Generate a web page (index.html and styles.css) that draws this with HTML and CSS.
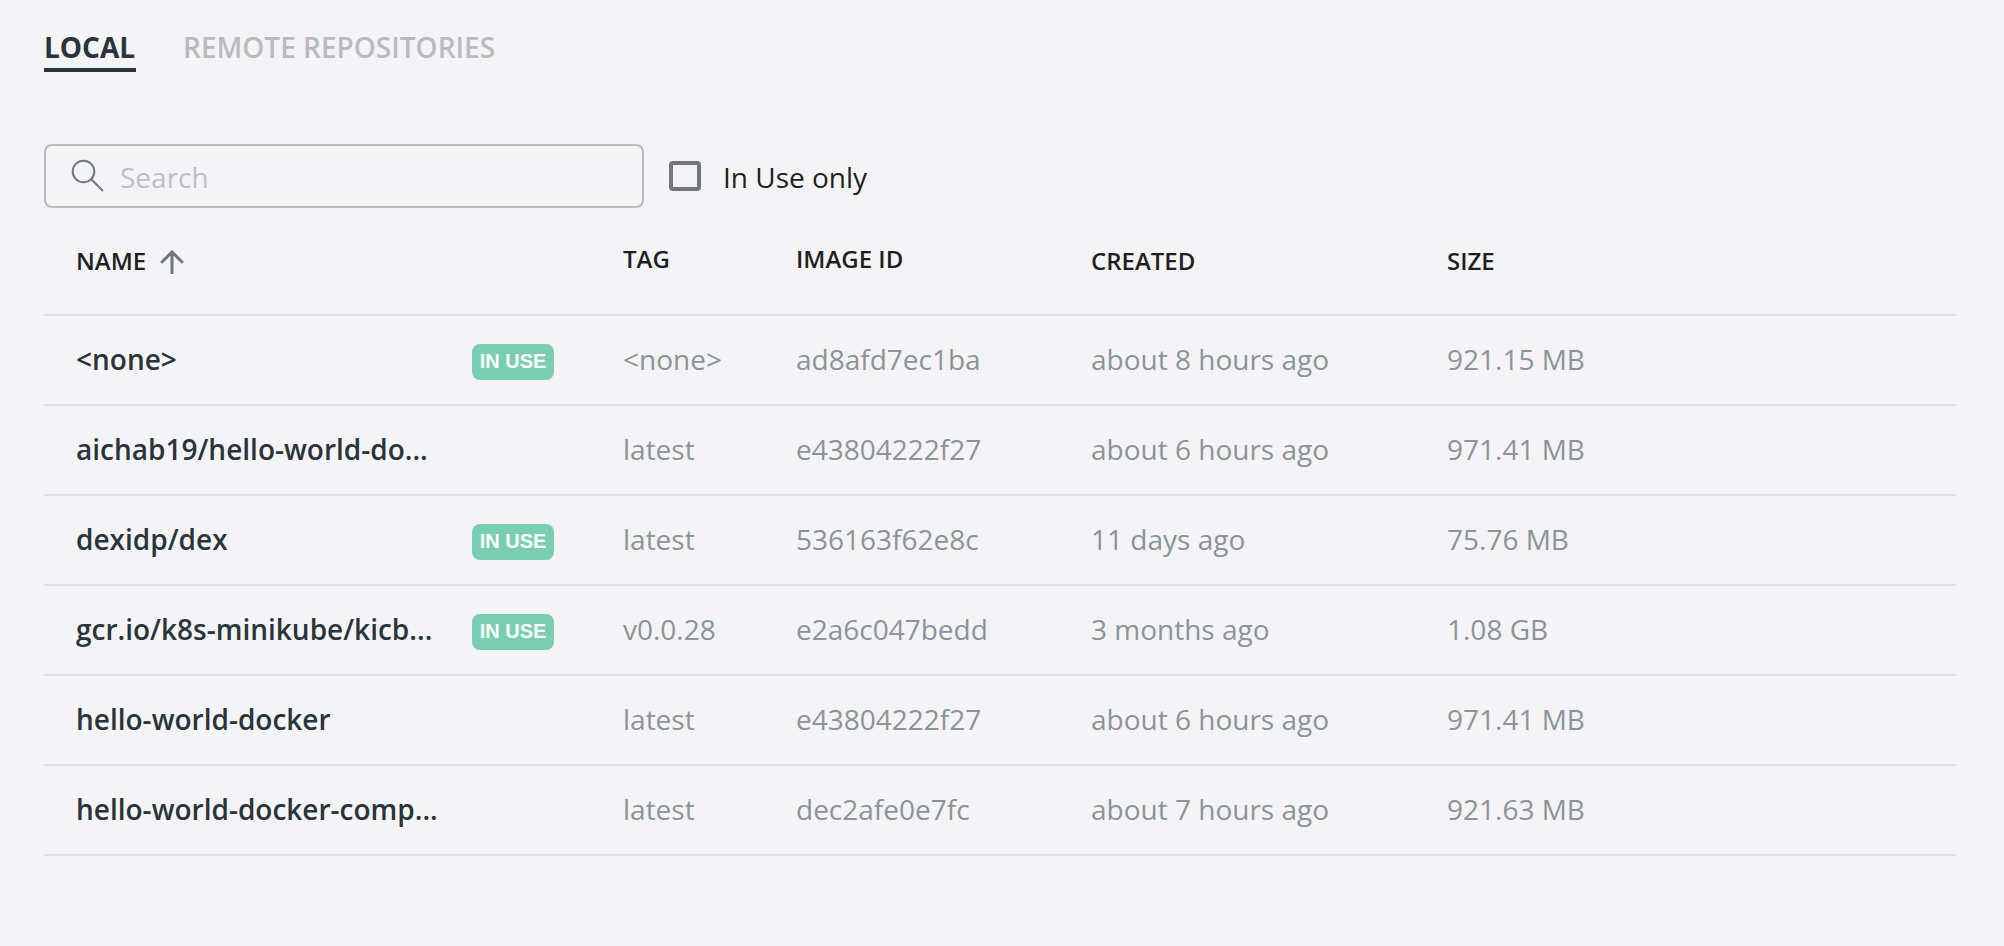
FILE: index.html
```html
<!DOCTYPE html>
<html lang="en">
<head>
<meta charset="utf-8">
<title>Images</title>
<link rel="stylesheet" href="styles.css">
</head>
<body>
<main class="images">
  <nav class="tabs">
    <a class="tab active">LOCAL</a>
    <a class="tab">REMOTE REPOSITORIES</a>
  </nav>
  <div class="toolbar">
    <label class="search">
      <svg class="search-icon" width="34" height="34" viewBox="0 0 34 34" fill="none" stroke="#6f787d" stroke-width="2"><circle cx="12.5" cy="12.5" r="10.8"/><path d="M20.5 20.5L32 32"/></svg>
      <input class="search-input" type="text" placeholder="Search">
    </label>
    <label class="filter"><span class="checkbox"></span><span class="filter-text">In Use only</span></label>
  </div>
  <section class="table">
    <div class="row head">
      <div class="sorted"><span>NAME</span><svg class="sort-icon" width="24" height="24" viewBox="0 0 24 24" fill="none" stroke="#6f787d" stroke-width="3"><path d="M12 24V2M1.2 12.8L12 2L22.8 12.8"/></svg></div>
      <div></div><div class="raised">TAG</div><div class="raised">IMAGE ID</div><div>CREATED</div><div>SIZE</div>
    </div>
    <div class="row"><div class="name">&lt;none&gt;</div><div><span class="badge">IN USE</span></div><div>&lt;none&gt;</div><div>ad8afd7ec1ba</div><div>about 8 hours ago</div><div>921.15 MB</div></div>
    <div class="row"><div class="name">aichab19/hello-world-do...</div><div></div><div>latest</div><div>e43804222f27</div><div>about 6 hours ago</div><div>971.41 MB</div></div>
    <div class="row"><div class="name">dexidp/dex</div><div><span class="badge">IN USE</span></div><div>latest</div><div>536163f62e8c</div><div>11 days ago</div><div>75.76 MB</div></div>
    <div class="row"><div class="name">gcr.io/k8s-minikube/kicb...</div><div><span class="badge">IN USE</span></div><div>v0.0.28</div><div>e2a6c047bedd</div><div>3 months ago</div><div>1.08 GB</div></div>
    <div class="row"><div class="name">hello-world-docker</div><div></div><div>latest</div><div>e43804222f27</div><div>about 6 hours ago</div><div>971.41 MB</div></div>
    <div class="row"><div class="name">hello-world-docker-comp...</div><div></div><div>latest</div><div>dec2afe0e7fc</div><div>about 7 hours ago</div><div>921.63 MB</div></div>
  </section>
</main>
</body>
</html>
```
FILE: styles.css
```css
* { box-sizing: border-box; }
body {
  margin: 0;
  background: #f4f4f6;
  font-family: "Open Sans", "Noto Sans", sans-serif;
  font-size: 28px;
  line-height: 38px;
  color: #1f1f1f;
}
.images { padding: 28px 48px 0 44px; }
.tabs { display: flex; gap: 47px; height: 44px; }
.tab { height: 44px; font-weight: 600; color: #b8bcbe; white-space: nowrap; }
.tab.active { width: 92px; font-weight: 700; color: #2a343b; border-bottom: 4px solid #2a343b; }
.toolbar { display: flex; gap: 25px; margin-top: 72px; height: 64px; }
.search {
  display: flex;
  align-items: center;
  width: 600px;
  padding-left: 25px;
  gap: 15px;
  border: 2px solid #b9b9ba;
  border-radius: 8px;
}
.search-icon { flex: none; }
.search-input {
  flex: 1;
  min-width: 0;
  height: 38px;
  margin-top: 1px;
  padding: 0;
  border: 0;
  outline: 0;
  background: transparent;
  font: inherit;
}
.search-input::placeholder { color: #bcc1c3; opacity: 1; }
.filter { display: flex; align-items: center; gap: 22px; padding-top: 3px; }
.filter-text { padding-bottom: 2px; }
.checkbox { width: 32px; height: 30px; margin-bottom: 4px; border: 4px solid #6f787d; border-radius: 4px; }
.row {
  display: grid;
  grid-template-columns: 396px 151px 173px 295px 356px 1fr;
  align-items: center;
  height: 90px;
  padding: 0 0 2px 32px;
  border-bottom: 2px solid #e0e0e2;
  color: #8b9499;
  white-space: nowrap;
}
.head { height: 108px; padding-bottom: 0; font-size: 24px; font-weight: 600; color: #1f1f1f; }
.sorted { display: flex; align-items: center; gap: 14px; }
.sort-icon { margin-top: 2px; }
.raised { padding-bottom: 4px; }
.name { font-weight: 600; color: #2a343b; }
.badge {
  display: block;
  width: 82px;
  height: 36px;
  margin-top: 6px;
  border-radius: 8px;
  background: #79ceb2;
  color: #fff;
  font: 700 20px/34px "Liberation Sans", Arial, sans-serif;
  text-align: center;
}
```
